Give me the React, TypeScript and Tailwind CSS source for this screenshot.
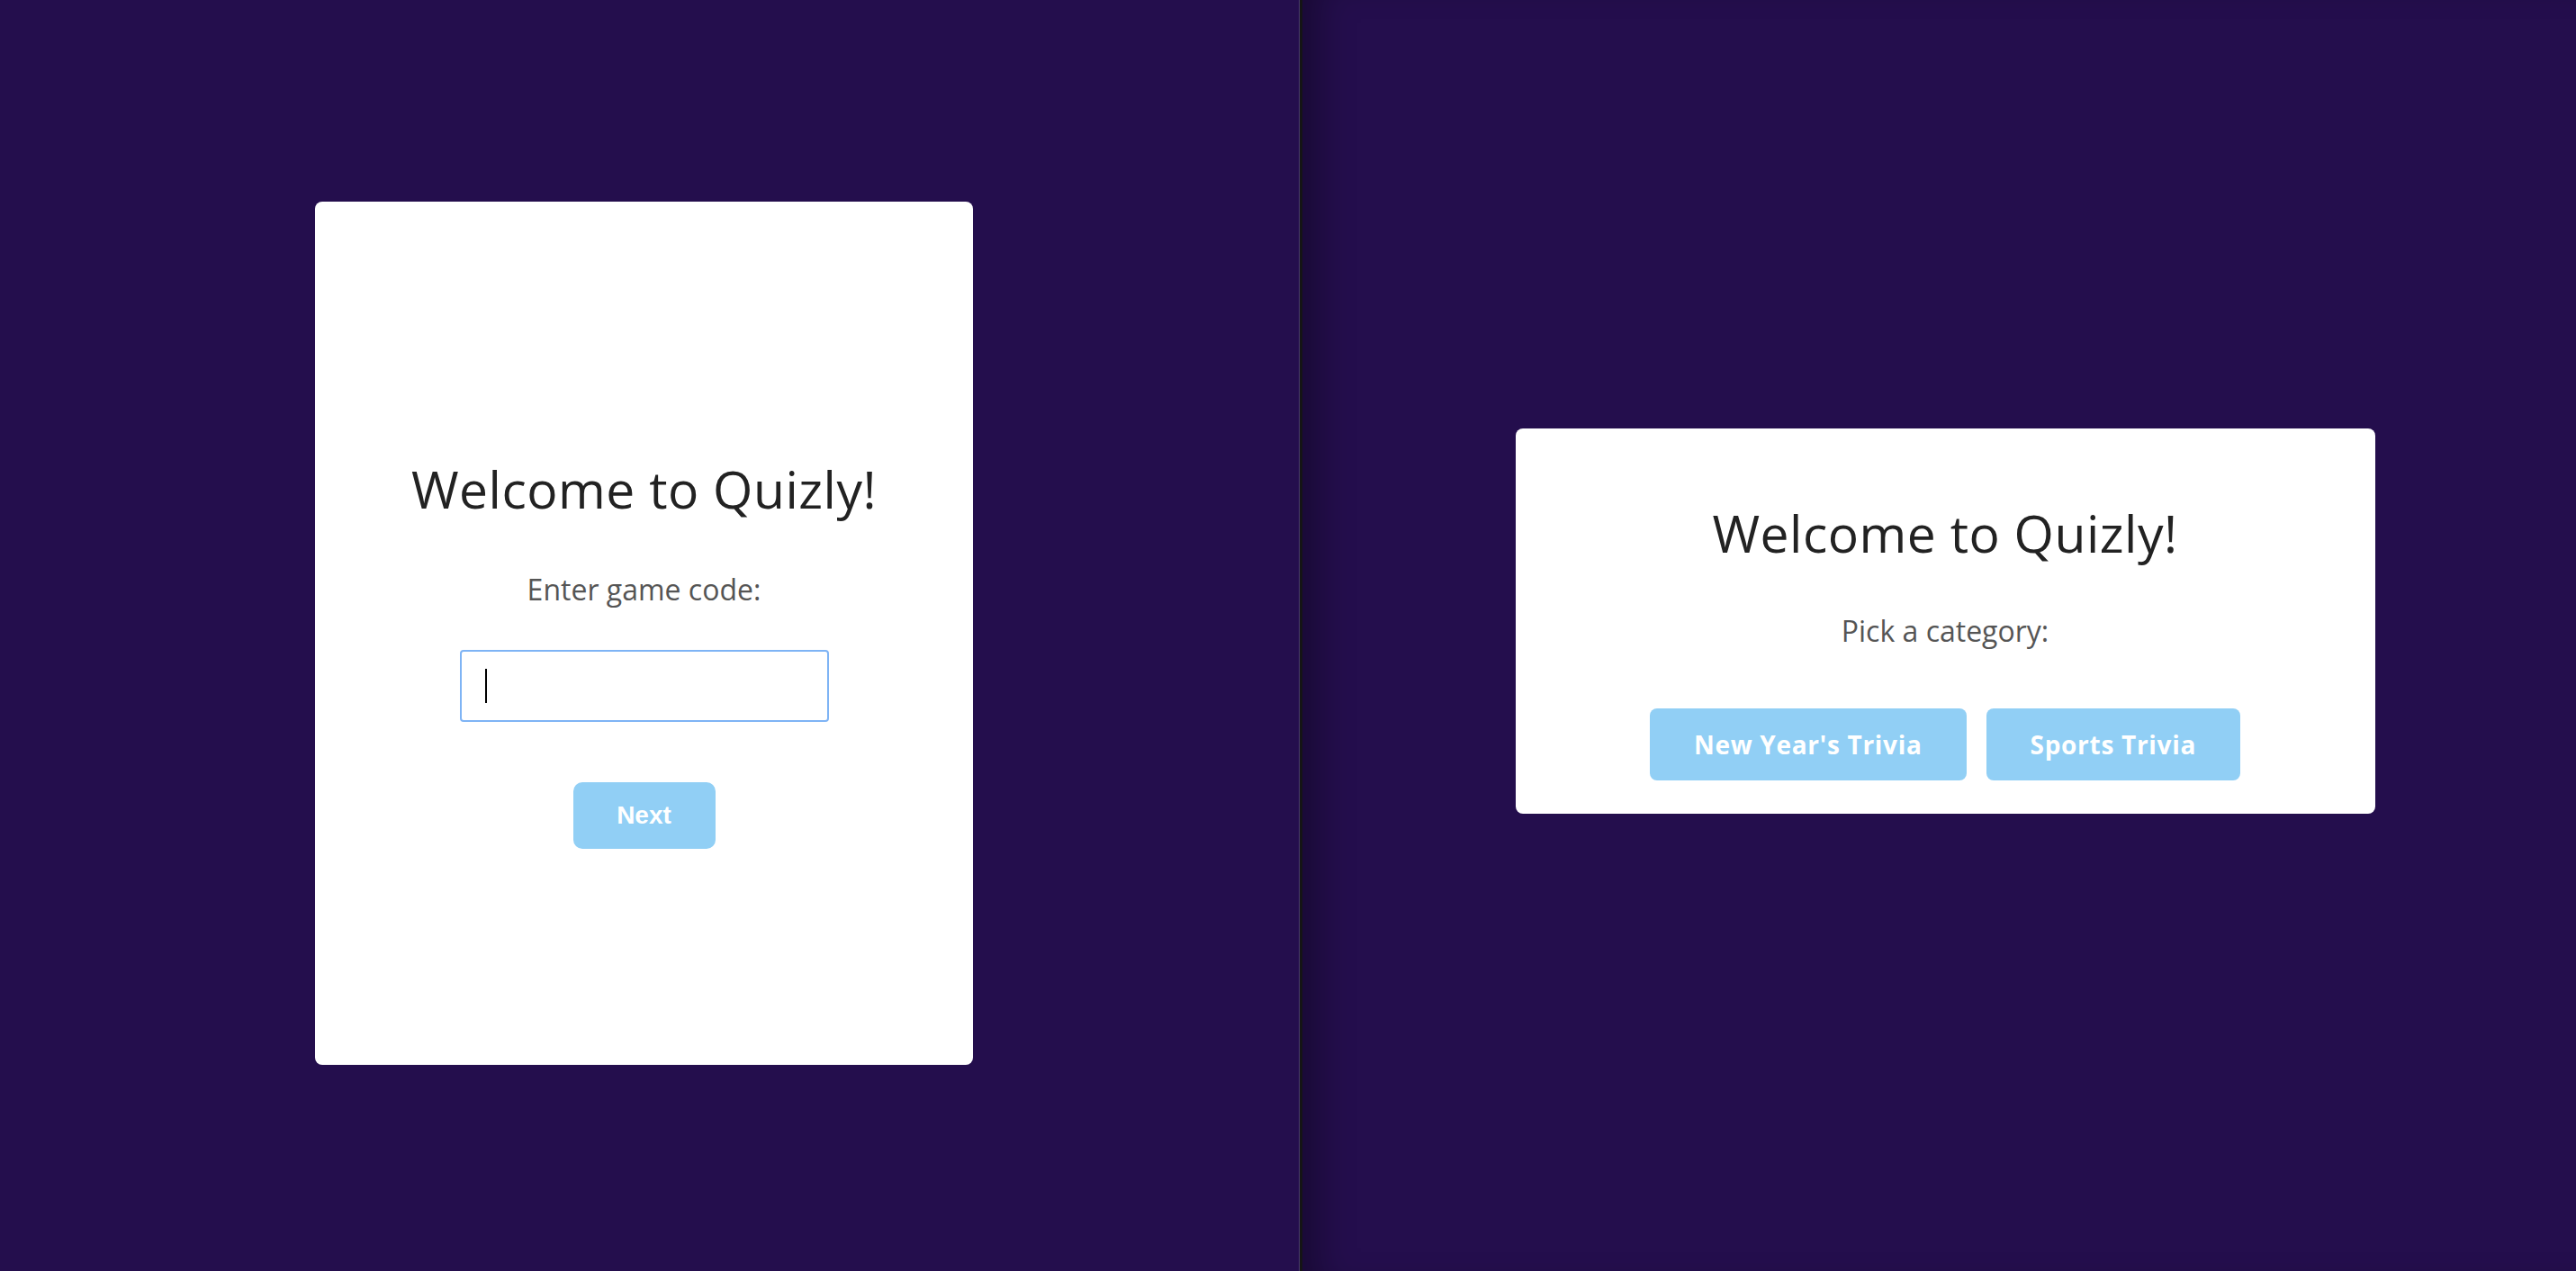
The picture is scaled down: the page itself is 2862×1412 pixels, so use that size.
import React from 'react';

const font = "font-['Open_Sans',_'Noto_Sans',_sans-serif]";

const Title: React.FC = () => (
  <h1 className="text-[57px] leading-[80px] tracking-[0.5px] text-[#222222] font-normal">
    Welcome to Quizly!
  </h1>
);

const JoinCard: React.FC = () => (
  <div className="w-[731px] h-[959px] bg-white rounded-[8px] flex flex-col items-center pt-[279px]">
    <Title />
    <p className="mt-[51px] text-[32px] leading-[42px] text-[#555555]">Enter game code:</p>
    {/* fake focused input with caret */}
    <div className="mt-[46px] w-[410px] h-[80px] border-2 border-[#7fb4f5] rounded-[4px] pl-[26px] pt-[19px]">
      <span className="block w-[2px] h-[38px] bg-black" />
    </div>
    <button className="mt-[67px] w-[158px] h-[74px] rounded-[10px] bg-[#91cff5] text-white text-[28px] font-bold font-['Liberation_Sans',_Arial,_sans-serif]">
      Next
    </button>
  </div>
);

const CategoryCard: React.FC = () => (
  <div className="w-[955px] h-[428px] bg-white rounded-[8px] flex flex-col items-center pt-[76px]">
    <Title />
    <p className="mt-[48px] text-[32px] leading-[42px] text-[#555555]">Pick a category:</p>
    <div className="mt-[65px] flex gap-[22px]">
      {["New Year's Trivia", 'Sports Trivia'].map((c) => (
        <button
          key={c}
          className="h-[80px] px-[49px] rounded-[8px] bg-[#91cff5] text-white text-[28px] font-bold tracking-[0.7px]"
        >
          {c}
        </button>
      ))}
    </div>
  </div>
);

export default function App() {
  return (
    <div className={`${font} w-[2862px] h-[1412px] flex bg-[#240e4d] overflow-hidden`}>
      {/* Left window */}
      <div className="w-[1444px] h-full bg-[#240e4d] border-r border-[#4a3a72] flex items-center justify-center pr-[12px] pb-[5px]">
        <JoinCard />
      </div>
      {/* Divider */}
      <div className="w-[3px] h-full bg-[#151515]" />
      {/* Right window */}
      <div className="flex-1 h-full bg-[#240e4d] shadow-[inset_40px_0_40px_-24px_rgba(0,0,0,0.35)] flex items-center justify-center pl-[13px] pb-[32px]">
        <CategoryCard />
      </div>
    </div>
  );
}
